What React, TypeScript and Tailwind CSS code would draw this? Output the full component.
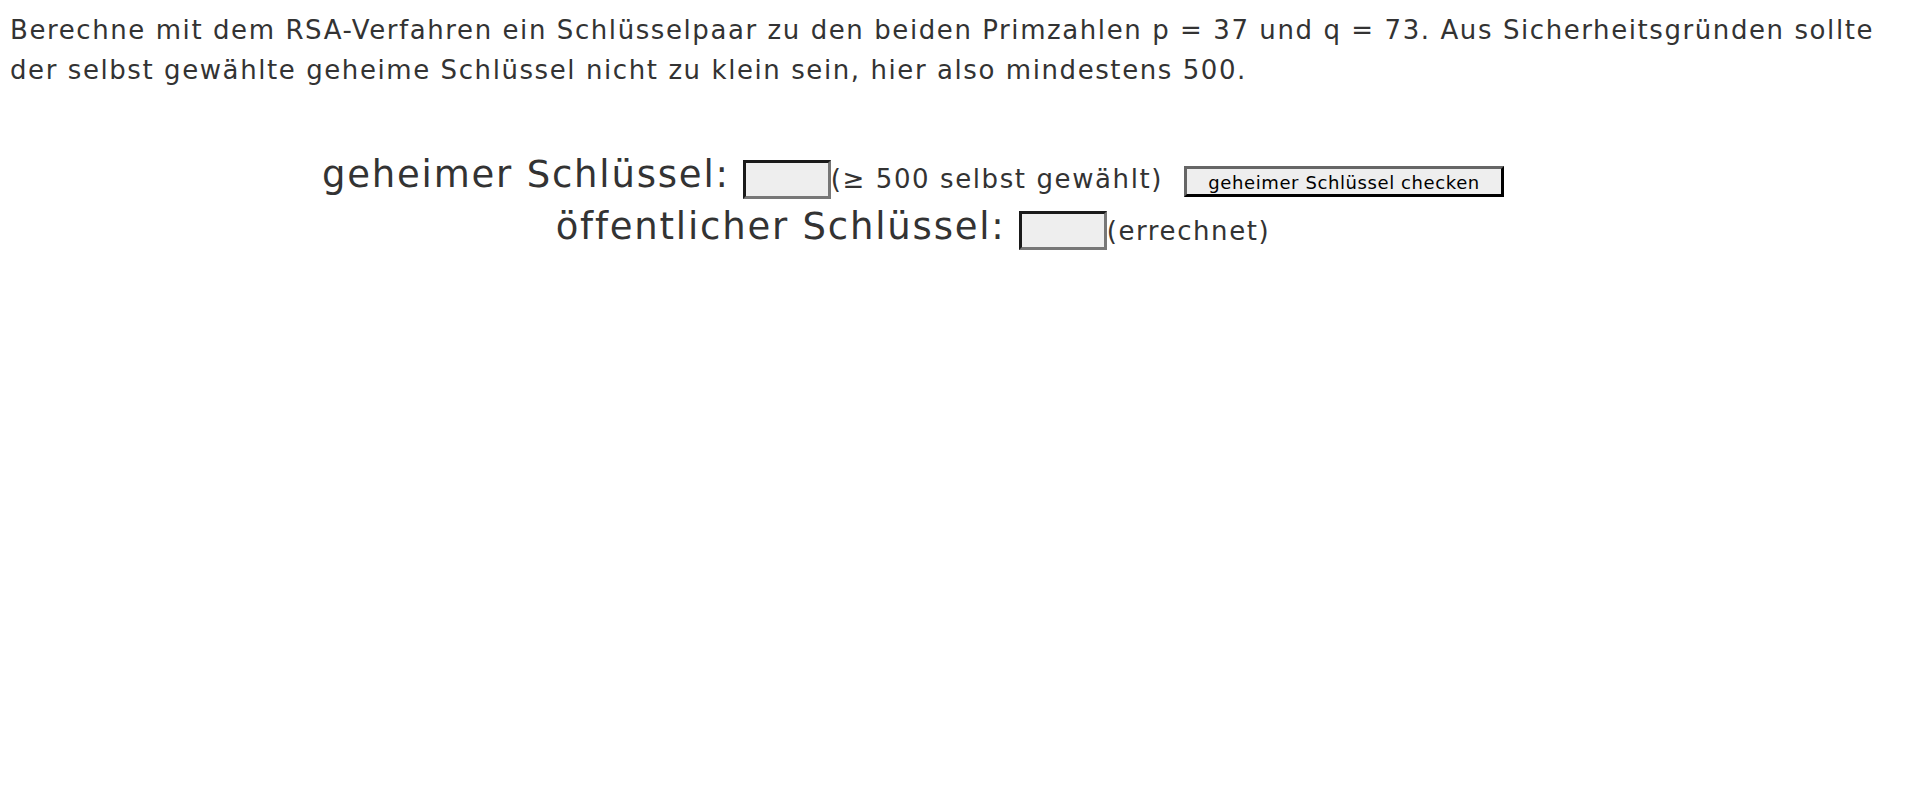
import React, { useState } from 'react';

const App: React.FC = () => {
  const [secretKey, setSecretKey] = useState('');
  const [publicKey] = useState('');

  return (
    <div className="min-h-screen bg-white text-[#333333] font-['DejaVu_Sans',sans-serif]">
      {/* Aufgabe */}
      <p className="px-[10px] pt-[10px] text-[26px] leading-[40px] tracking-[1.58px]">
        Berechne mit dem RSA-Verfahren ein Schlüsselpaar zu den beiden Primzahlen p = 37 und q = 73. Aus Sicherheitsgründen sollte
        <br />
        der selbst gewählte geheime Schlüssel nicht zu klein sein, hier also mindestens 500.
      </p>

      {/* Schlüsselpaar */}
      <div className="mt-[63px] pl-[10px] pr-[104px] text-center">
        <div className="flex items-end justify-center">
          <span className="text-[37px] leading-[44px] tracking-[1.8px]">geheimer Schlüssel:</span>
          <input
            value={secretKey}
            onChange={(e) => setSecretKey(e.target.value)}
            className="ml-[13px] mb-[-2px] h-[39px] w-[88px] border-[3px] border-t-[#1a1a1a] border-l-[#1a1a1a] border-b-[#777777] border-r-[#777777] bg-[#eeeeee] outline-none"
          />
          <span className="text-[26px] leading-[36px] tracking-[1.6px]">(≥ 500 selbst gewählt)</span>
          <button className="ml-[21px] mb-0 h-[31px] w-[320px] border-[3px] border-t-[#666666] border-l-[#666666] border-b-black border-r-black bg-[#eeeeee] text-[18px] tracking-[0.6px] text-black">
            geheimer Schlüssel checken
          </button>
        </div>
        <div className="mt-[8px] flex items-end justify-center">
          <span className="text-[37px] leading-[44px] tracking-[1.8px]">öffentlicher Schlüssel:</span>
          <input
            value={publicKey}
            readOnly
            className="ml-[13px] mb-[-1px] h-[39px] w-[88px] border-[3px] border-t-[#1a1a1a] border-l-[#1a1a1a] border-b-[#777777] border-r-[#777777] bg-[#eeeeee] outline-none"
          />
          <span className="text-[26px] leading-[36px] tracking-[1.6px]">(errechnet)</span>
        </div>
      </div>
    </div>
  );
};

export default App;
